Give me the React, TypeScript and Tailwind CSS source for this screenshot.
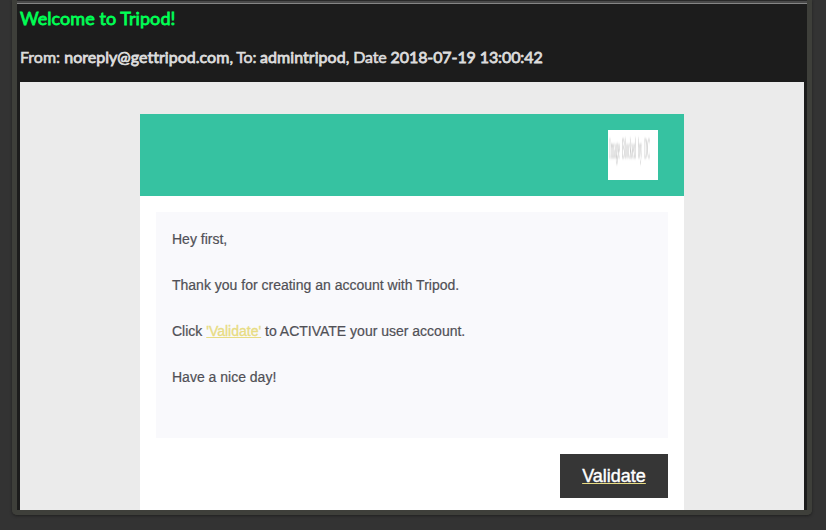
import type { ReactNode } from "react";

function Strong({ children, className }: { children: ReactNode; className: string }) {
  return (
    <span className={`inline-block whitespace-nowrap font-normal [-webkit-text-stroke:0.8px_currentColor] ${className}`}>
      {children}
    </span>
  );
}

function MessageHeader() {
  return (
    <header className="h-[78px] shrink-0 pl-[3px] font-['Lato',sans-serif] text-[#dddddd]">
      <h1 className="pt-[2px] text-[18px] leading-6 text-[#00ff55]">
        <Strong className="tracking-[0.06px]">Welcome to Tripod!</Strong>
      </h1>
      <p className="mt-[15px] whitespace-pre text-[16px] leading-6 [-webkit-text-stroke:0.6px_currentColor]">
        <span>From: </span>
        <Strong className="tracking-[0.03px]">noreply@gettripod.com</Strong>
        <span className="tracking-[-0.2px]">, To: </span>
        <Strong className="tracking-[0.04px]">admintripod</Strong>
        <span className="tracking-[-0.12px]">, Date </span>
        <Strong className="tracking-[-0.1px]">2018-07-19 13:00:42</Strong>
      </p>
    </header>
  );
}

function BlockedImage() {
  return (
    <div className="mt-4 h-[50px] w-[50px] overflow-hidden bg-white">
      <span className="block w-max origin-top-left scale-x-[0.325] scale-y-[2.3] whitespace-nowrap pl-1 font-['Liberation_Serif',serif] text-[13px] leading-[16px] text-[#b8b8b8] blur-[0.7px] [word-spacing:3px]">
        Image Blocked by DC
      </span>
    </div>
  );
}

function Email() {
  return (
    <article className="h-[396px] w-[544px] bg-white font-['Liberation_Sans',Arial,sans-serif]">
      <div className="flex h-[82px] justify-end bg-[#36c2a1] pr-[26px]">
        <BlockedImage />
      </div>
      <div className="mx-4 mt-4 flex h-[226px] flex-col gap-[23px] bg-[#f9f9fc] px-4 pt-4 text-[14px] leading-[23px] text-[#505056] [-webkit-text-stroke:0.2px_currentColor]">
        <p>Hey first,</p>
        <p>Thank you for creating an account with Tripod.</p>
        <p>
          Click <a className="text-[#e8dc83] underline [-webkit-text-stroke:0.35px_currentColor]">'Validate'</a> to ACTIVATE your user account.
        </p>
        <p>Have a nice day!</p>
      </div>
      <div className="mr-4 mt-4 flex justify-end">
        <a className="flex h-11 w-[108px] items-center justify-center bg-[#363636] text-[18px] text-white underline decoration-[#e8dc83] [-webkit-text-stroke:0.4px_currentColor]">
          Validate
        </a>
      </div>
    </article>
  );
}

export default function App() {
  return (
    <div className="h-[530px] w-[826px] overflow-hidden bg-[#333333] pl-3 pr-[14px]">
      <div className="flex h-[515px] flex-col overflow-hidden rounded-b-[5px] border-x-[5px] border-b-[5px] border-[#3e3f3a] bg-[#1c1c1c] shadow-[0_1px_3px_#1f1f1f]">
        <div className="h-px shrink-0 bg-[#292929]" />
        <div className="h-[2px] shrink-0 bg-[#494949]" />
        <div className="h-px shrink-0 bg-[#858585]" />
        <MessageHeader />
        <div className="mx-[3px] flex h-[428px] shrink-0 justify-center bg-[#ebebeb] pt-8">
          <Email />
        </div>
      </div>
    </div>
  );
}
